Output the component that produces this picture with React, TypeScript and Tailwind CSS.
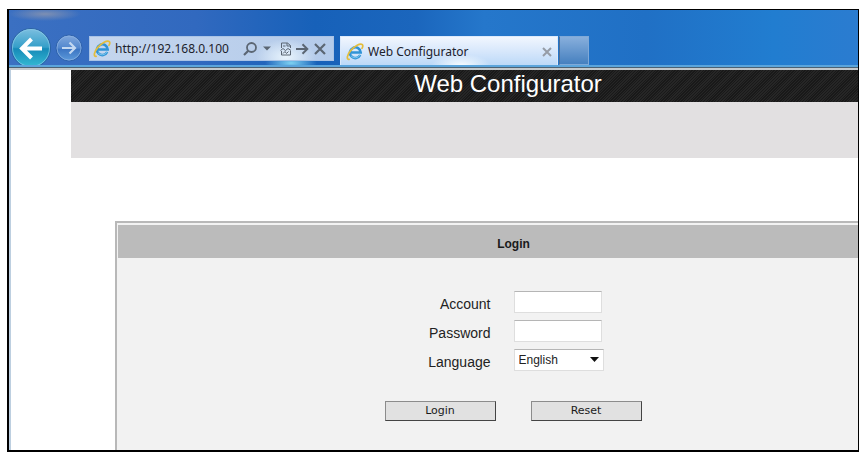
import React from "react";

function IeLogo() {
  return (
    <svg width="18" height="18" viewBox="0 0 18 18" fill="none" className="shrink-0" aria-hidden="true">
      <path d="M14.2 12a5.4 5.4 0 1 1 .5-2.6H4.6" stroke="#2f93d6" strokeWidth="2.5" />
      <path d="M14 11.6a5.2 5.2 0 0 1-9 1.2" stroke="#7cc8ee" strokeWidth="1" />
      <path
        d="M3.2 16.3C.2 16.6 1 12 4.600 7.600 8.400 3 14.400-.2 16.300 1.700c.9.9.5 2.300-.3 3.700"
        stroke="#e3bd3c"
        strokeWidth="1.700"
        strokeLinecap="round"
      />
    </svg>
  );
}

function BackIcon() {
  return (
    <svg width="40" height="38" viewBox="0 0 40 38" fill="none" aria-hidden="true">
      <defs>
        <linearGradient id="back" x1="0" y1="0" x2="0" y2="1">
          <stop offset="0" stopColor="#7dbfe0" />
          <stop offset=".48" stopColor="#359fc9" />
          <stop offset=".52" stopColor="#168ab8" />
          <stop offset="1" stopColor="#36bcd4" />
        </linearGradient>
      </defs>
      <circle cx="20" cy="20" r="19.500" fill="url(#back)" stroke="#2a62a4" />
      <circle cx="20" cy="20" r="18.500" stroke="#8ccbe8" strokeOpacity=".7" />
      <path d="M31 20.500H11M20.500 11 11 20.500l9.500 9.500" stroke="#fff" strokeWidth="4" />
    </svg>
  );
}

function ForwardIcon() {
  return (
    <svg width="28" height="28" viewBox="0 0 28 28" fill="none" aria-hidden="true">
      <defs>
        <linearGradient id="forward" x1="0" y1="0" x2="0" y2="1">
          <stop offset="0" stopColor="#82a9dd" />
          <stop offset=".5" stopColor="#5287ce" />
          <stop offset=".55" stopColor="#3c75c3" />
          <stop offset="1" stopColor="#5d9bdb" />
        </linearGradient>
      </defs>
      <circle cx="14" cy="14" r="13" fill="url(#forward)" stroke="#2e61ab" />
      <circle cx="14" cy="14" r="12" stroke="#8db4e4" strokeOpacity=".7" />
      <path d="M7 14h13M14.500 8.500 20 14l-5.500 5.500" stroke="#c3d8f1" strokeWidth="2.200" />
    </svg>
  );
}

function AddressBar() {
  return (
    <div className="flex h-[25px] w-[245px] items-center border border-[#a9c3e6] bg-[radial-gradient(ellipse_30px_18px_at_196px_20px,#e8f4fd,transparent),linear-gradient(to_right,#c5d6ee,#b4cbea)] pl-[3px] pr-[6px] text-[#5b6673]">
      <IeLogo />
      <input
        aria-label="Address"
        defaultValue="http://192.168.0.100"
        className="ml-1 w-[127px] min-w-0 bg-transparent font-['Noto_Sans','Open_Sans',sans-serif] text-[12px] leading-4 text-[#1c222b] outline-none"
      />
      <button type="button" aria-label="Search" className="shrink-0">
        <svg width="16" height="16" viewBox="0 0 16 16" fill="none" stroke="currentColor" aria-hidden="true">
          <circle cx="9.500" cy="6.500" r="4.500" strokeWidth="1.800" />
          <path d="M6.300 9.800 2 14" strokeWidth="2.200" />
        </svg>
      </button>
      <button type="button" aria-label="Search options" className="ml-[5px] shrink-0">
        <svg width="8" height="5" viewBox="0 0 8 5" fill="currentColor" aria-hidden="true">
          <path d="M0 .5h8L4 4.500z" />
        </svg>
      </button>
      <button type="button" aria-label="Compatibility view" className="ml-[9px] shrink-0">
        <svg width="12" height="14" viewBox="0 0 12 14" fill="none" stroke="currentColor" aria-hidden="true">
          <path d="M1.500 6V1h6L10.500 3.500V6M1.500 9v4h9V9M7 1v3h3.500" />
          <path d="m.5 8.500 2.500-2 2.500 2 2.500-2 3 2M3 4h2.500M3 11.500l2-2 1.500 2 2-2" />
        </svg>
      </button>
      <button type="button" aria-label="Go" className="ml-1 shrink-0">
        <svg width="13" height="12" viewBox="0 0 13 12" fill="none" stroke="currentColor" strokeWidth="2" aria-hidden="true">
          <path d="M0 6h11M6.500 1.200 11.300 6l-4.800 4.800" />
        </svg>
      </button>
      <button type="button" aria-label="Stop" className="ml-[5px] shrink-0">
        <svg width="12" height="12" viewBox="0 0 12 12" fill="none" stroke="currentColor" strokeWidth="2.200" aria-hidden="true">
          <path d="m1 1 10 10M11 1 1 11" />
        </svg>
      </button>
    </div>
  );
}

function BrowserBar() {
  return (
    <header className="flex items-end overflow-hidden bg-[radial-gradient(ellipse_36px_7px_at_36px_4px,#7d8fb3,transparent),radial-gradient(ellipse_26px_9px_at_282px_53px,#7fd2f2,transparent),linear-gradient(to_right,#3b70c2,#3169bf_22%,#1761b9_36%,#1b66bd_48%,#2577cb_56%,#2070c5_75%,#217dd0_90%,#2b7cd0)] pt-[18px]">
      <nav aria-label="History and address" className="flex h-[37px] shrink-0 items-start pl-[2px]">
        <button type="button" aria-label="Back">
          <BackIcon />
        </button>
        <button type="button" aria-label="Forward" className="ml-1 mt-[6px]">
          <ForwardIcon />
        </button>
        <div className="ml-[6px] mt-2">
          <AddressBar />
        </div>
      </nav>
      <div className="ml-[6px] flex h-[29px] w-[218px] shrink-0 items-center border border-b-0 border-[#dbe9fb] bg-[radial-gradient(ellipse_30px_12px_at_120px_29px,#fafdff,transparent),linear-gradient(to_bottom,#f1f6fe,#d5e6fb_55%,#bcd9f8)] pl-[5px] pr-[5px] pt-[2px]">
        <IeLogo />
        <span className="ml-1 grow whitespace-nowrap font-['Noto_Sans','Open_Sans',sans-serif] text-[12px] leading-4 text-[#1c222b]">
          Web Configurator
        </span>
        <button type="button" aria-label="Close tab">
          <svg width="10" height="10" viewBox="0 0 10 10" fill="none" stroke="#969ca6" strokeWidth="2" aria-hidden="true">
            <path d="m1 1 8 8M9 1 1 9" />
          </svg>
        </button>
      </div>
      <button
        type="button"
        aria-label="New tab"
        className="ml-px h-[29px] w-[30px] shrink-0 border border-[#7fa9d8] border-l-[#4f6f96] bg-linear-to-b from-[#88afdc] to-[#4580bf]"
      />
    </header>
  );
}

const fieldClass = "h-[22px] w-[88px] border border-[#dedede] border-t-[#b5b5b5] bg-white px-1 text-[12px] outline-none";
const labelClass = "pt-1 text-right text-[14px] leading-[18px] text-[#222]";
const buttonClass =
  "h-5 w-[111px] border border-[#8c8c8c] border-b-[#444] border-r-[#444] bg-[#e1e1e1] font-['DejaVu_Sans',sans-serif] text-[11px] leading-4 text-[#1a1a1a]";

function LoginPanel() {
  return (
    <section className="ml-[44px] mr-[34px] mt-[63px] border-2 border-b-0 border-[#b8b8b8] bg-[#f2f2f2]">
      <h2 className="ml-px mt-[2px] bg-[#bbb] pb-[6px] pt-[11px] text-center text-[12px] font-bold leading-4 text-[#1a1a1a]">
        Login
      </h2>
      <form className="mx-auto w-[257px] pb-[29px] pt-[33px]" onSubmit={(e) => e.preventDefault()}>
        <div className="grid grid-cols-[106px_1fr] gap-x-[23px] gap-y-[7px]">
          <label htmlFor="account" className={labelClass}>Account</label>
          <input id="account" type="text" className={fieldClass} />
          <label htmlFor="password" className={labelClass}>Password</label>
          <input id="password" type="password" className={fieldClass} />
          <label htmlFor="language" className={labelClass}>Language</label>
          <div className="relative h-[22px] w-[90px]">
            <select
              id="language"
              className="block h-[22px] w-full appearance-none border border-[#dedede] border-t-[#b5b5b5] bg-white pl-1 text-[12px] leading-4 text-[#222] outline-none"
            >
              <option>English</option>
            </select>
            <svg
              width="9"
              height="5"
              viewBox="0 0 9 5"
              className="pointer-events-none absolute right-[5px] top-[8px]"
              aria-hidden="true"
            >
              <path d="M0 0h9L4.500 5z" fill="#111" />
            </svg>
          </div>
        </div>
        <div className="mt-[30px] flex justify-between">
          <button type="submit" className={buttonClass}>Login</button>
          <button type="reset" className={buttonClass}>Reset</button>
        </div>
      </form>
    </section>
  );
}

export default function App() {
  return (
    <div className="bg-white px-[7px] pb-[7px] pt-[9px] font-['Liberation_Sans',Arial,sans-serif]">
      <div className="overflow-hidden border-2 border-r border-t border-black">
        <BrowserBar />
        <div className="h-[2px] bg-[#5ba5dc]" />
        <div className="h-px bg-[#4b6274]" />
        <div className="h-[2px] bg-[#c3c8cc]" />
        <main className="border-l-2 border-[#bdcfe0] bg-white pl-[60px]">
          <div className="-mr-[87px]">
            <h1 className="bg-[#191919] bg-[repeating-linear-gradient(135deg,#262626_0px,#262626_1px,transparent_1px,transparent_2px)] pb-1 text-center text-[24px] leading-7 text-white">
              Web Configurator
            </h1>
            <div className="h-14 bg-[#e2e0e1]" />
            <LoginPanel />
          </div>
        </main>
      </div>
    </div>
  );
}
